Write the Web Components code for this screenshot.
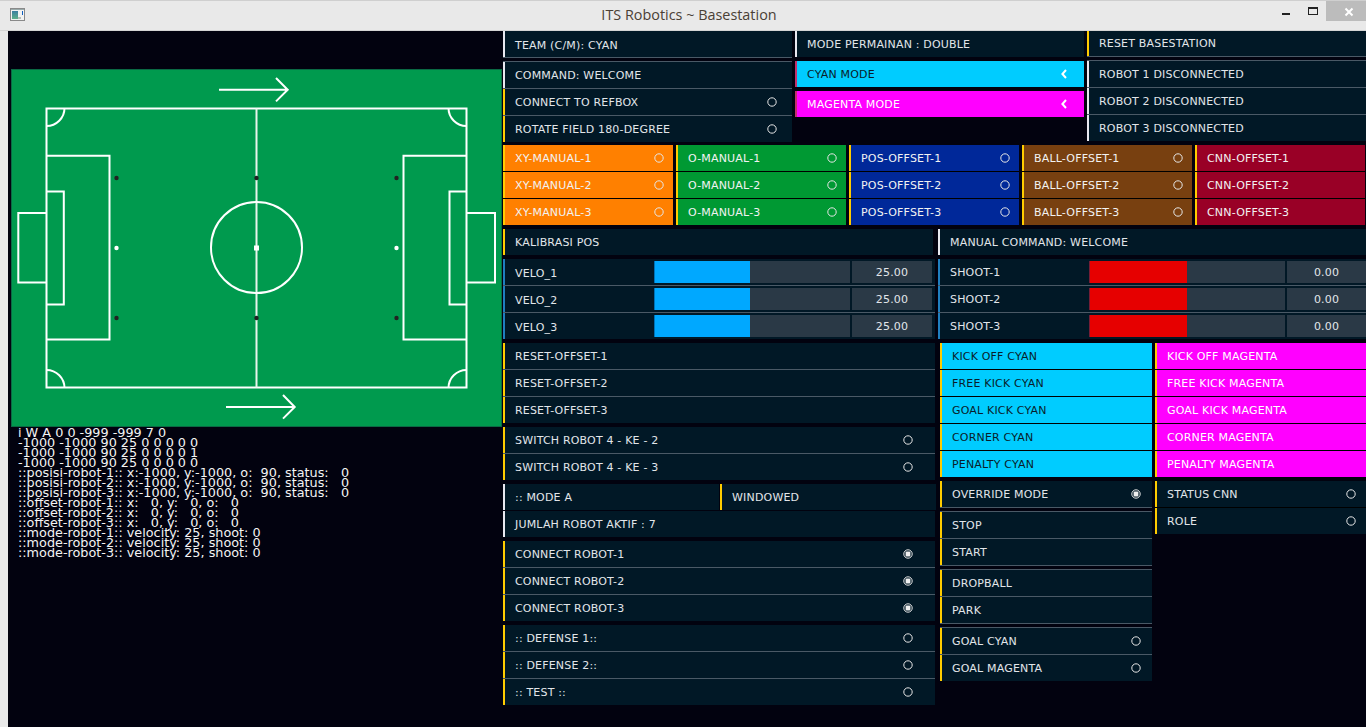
<!DOCTYPE html>
<html><head><meta charset="utf-8"><title>ITS Robotics ~ Basestation</title>
<style>
html,body{margin:0;padding:0;background:#e9e9e9;overflow:hidden}
</style></head><body>
<script>
const def=(name,css,html)=>{
  customElements.define(name,class extends HTMLElement{
    constructor(){super();this.attachShadow({mode:'open'}).innerHTML='<style>'+css+'</style>'+html;}
  });
};
def('x-window',`:host{display:flex;flex-direction:column;width:1366px;height:727px;overflow:hidden;box-sizing:border-box;background:#e9e9e9}
 .body{display:flex;flex:1;min-height:0;margin-left:8px;background:#02020f}
 `,`<slot name="title"></slot><div class="body"><slot></slot></div>`);
def('x-titlebar',`:host{display:flex;height:31px;box-sizing:border-box;border-top:1px solid #cfcfcf;border-bottom:1px solid #d4d4d4;background:#e9e9e9;align-items:flex-start;flex:none}
 .ic{width:98px;flex:none;padding:7px 0 0 10px;box-sizing:border-box}
 .t{flex:none;width:1182px;text-align:center;font:14.4px/28px "Open Sans","Noto Sans",sans-serif;color:#4a4036}
 .c{display:flex;width:86px;flex:none;height:20px}
 .x{width:40px;height:20px;margin-left:auto;background:#bcbcbc}
 svg{display:block}`,
 `<div class="ic"><svg width="15" height="14" viewBox="0 0 15 14"><rect x=".5" y=".5" width="14" height="12" fill="#f2f2f2" stroke="#8a8a8a"/><rect x="1" y="1" width="13" height="1" fill="#9aa"/><defs><linearGradient id="g" x1="0" y1="0" x2="0" y2="1"><stop offset="0" stop-color="#3c7fa0"/><stop offset="1" stop-color="#5fb08a"/></linearGradient></defs><rect x="2" y="3" width="6" height="8" fill="url(#g)"/><rect x="12" y="3" width="1" height="4" fill="#1060c0"/><rect x="8" y="9" width="3" height="2" fill="#b8c0b8"/></svg></div>
 <div class="t"><slot></slot></div>
 <div class="c"><svg width="46" height="20" style="flex:none"><rect x="2" y="12" width="8" height="2" fill="#222"/><rect x="28.5" y="6.5" width="9" height="7" fill="none" stroke="#222"/><rect x="28" y="6" width="10" height="2" fill="#222"/></svg><div class="x"><svg width="40" height="20"><path d="M19.5 7.5l7 7M26.5 7.5l-7 7" stroke="#fff" stroke-width="2"/></svg></div></div>`);
def('x-left',`:host{display:flex;flex-direction:column;width:495px;flex:none}
 .f{margin:38px 0 0 3px;height:358px;flex:none}`,`<div class="f"><slot name="field"></slot></div><slot></slot>`);
def('x-field',`:host{display:block}svg{display:block}`,
`<svg width="492" height="358" viewBox="11 69 492 358">
<rect x="11.5" y="69.5" width="490" height="357" fill="#009a4e" stroke="#0a6a44"/>
<g fill="none" stroke="#fff" stroke-width="2">
<path d="M46.5 108.5H466.5V387.5H46.5Z"/>
<path d="M256.5 108.5V387.5" stroke="#e8f4ec"/>
<circle cx="256.5" cy="247.5" r="45.5"/>
<path d="M46.5 155.8H109.5V339.5H46.5"/><path d="M46.5 191.5H63.8V304.5H46.5"/><path d="M46.5 213H18.3V282.5H46.5"/>
<path d="M466.5 155.8H403.5V339.5H466.5"/><path d="M466.5 191.5H449.5V304.5H466.5"/><path d="M466.5 213H495V282.5H466.5"/>
<path d="M46.5 126a18 18 0 0 0 18-18"/><path d="M466.5 126a18 18 0 0 1-18-18"/>
<path d="M46.5 370a18 18 0 0 1 18 18"/><path d="M466.5 370a18 18 0 0 0-18 18"/>
<path d="M219 89.7H287.5M276 78L287.7 89.7L276 101.4"/>
<path d="M226 407H294.5M283 395L294.7 407L283 418.6"/>
</g>
<g fill="#222"><circle cx="116.5" cy="178" r="2.2"/><circle cx="256.5" cy="178" r="2.2"/><circle cx="396.5" cy="178" r="2.2"/><circle cx="116.5" cy="318" r="2.2"/><circle cx="256.5" cy="318" r="2.2"/><circle cx="396.5" cy="318" r="2.2"/></g>
<g fill="#fff"><circle cx="116.5" cy="248" r="2.2"/><circle cx="396.5" cy="248" r="2.2"/><rect x="254" y="245.5" width="5" height="5"/></g>
</svg>`);
def('x-log',`:host{display:block;padding:1px 0 0 10px;font:12.8px/10px "DejaVu Sans",sans-serif;color:#f4f4f4;white-space:pre}`,`<slot></slot>`);
def('x-right',`:host{display:flex;flex-direction:column;width:863px;flex:none;gap:3px;overflow:hidden}`,`<slot></slot>`);
def('x-band',`:host{display:flex;flex:none;align-items:flex-start}`,`<slot></slot>`);
def('x-stack',`:host{display:flex;flex-direction:column;flex:none}`,`<slot></slot>`);
def('x-group',`:host{display:flex;flex-direction:column;gap:1px;background:var(--line,#4a5966);flex:none}`,`<slot></slot>`);
const rowCss=`:host{display:flex;align-items:flex-start;height:26px;box-sizing:border-box;border-left:2px solid var(--bar,#ffcc00);background:var(--bg,#011826);color:var(--fg,#e2e6ea);padding-left:10px;font:11px "DejaVu Sans",sans-serif;letter-spacing:.18px;flex:none;white-space:pre;overflow:hidden}
 :host([bar=w]){--bar:#e8e8f0}:host([bar=b]){--bar:#1f7fbf}:host([bar=r]){--bar:#c0306a}
 .l{flex:1;min-width:0;line-height:var(--lh,28px)}svg{display:block;flex:none;align-self:center}`;
const radio=on=>`<svg width="10" height="10" viewBox="0 0 10 10"><circle cx="5" cy="5" r="4.2" fill="none" stroke="#e6e6e6" stroke-width="1"/>${on?'<rect x="2.6" y="2.6" width="4.8" height="4.8" rx="1" fill="#f0f0f0"/>':''}</svg>`;
def('x-row',rowCss,`<span class="l"><slot></slot></span>`);
def('x-toggle',rowCss+`:host{padding-right:var(--rr,15px)}`,`<span class="l"><slot></slot></span>${radio(false)}`);
def('x-toggle-on',rowCss+`:host{padding-right:var(--rr,15px)}`,`<span class="l"><slot></slot></span>${radio(true)}`);
def('x-mode',rowCss+`:host{padding-right:17px}`,`<span class="l"><slot></slot></span><svg width="6" height="10" viewBox="0 0 6 10"><path d="M5 1L1.4 5L5 9" fill="none" stroke="#fff" stroke-width="2"/></svg>`);
def('x-slider',rowCss+`:host{padding:2px 0 2px 10px;align-items:stretch}
 .l{flex:none;width:139px;line-height:var(--sl,26px)}
 .t{flex:none;width:196px;background:#2a3946}
 .f{height:100%;width:var(--fill,96px);background:var(--fc,#00a8ff);border-left:1px solid rgba(0,60,110,.5);box-sizing:border-box}
 .v{flex:1;margin:0 var(--vr,3px) 0 2px;background:#2a3946;text-align:center;line-height:24px}`,
 `<span class="l"><slot></slot></span><div class="t"><div class="f"></div></div><div class="v"><slot name="v"></slot></div>`);

const W=document.createElement('x-window');
const R=(t,a='')=>`<x-row ${a}>${t}</x-row>`;
const T=(t,rr,on,a='')=>`<x-toggle${on?'-on':''} ${a} style="--rr:${rr-5}px">${t}</x-toggle${on?'-on':''}>`;
const C=(n,bg,fg='#f2f2f2')=>`<x-group style="--line:#000;--bg:${bg};--fg:${fg};width:170px;margin-right:3px">${[1,2,3].map(i=>T(n+'-'+i,14,false)).join('')}</x-group>`;
const SL=(t,v,s)=>`<x-slider bar="b" style="${s}">${t}<span slot="v">${v}</span></x-slider>`;
const colorRows=(list,bg,fg,w)=>`<x-group style="--line:#000;--bg:${bg};--fg:${fg};width:${w}px">${list.map(t=>R(t)).join('')}</x-group>`;
W.innerHTML=`<x-titlebar slot="title">ITS Robotics ~ Basestation</x-titlebar>
<x-left><x-field slot="field"></x-field><x-log>i W A 0 0 -999 -999 7 0
-1000 -1000 90 25 0 0 0 0 0
-1000 -1000 90 25 0 0 0 0 1
-1000 -1000 90 25 0 0 0 0 0
::posisi-robot-1:: x:-1000, y:-1000, o:  90, status:   0
::posisi-robot-2:: x:-1000, y:-1000, o:  90, status:   0
::posisi-robot-3:: x:-1000, y:-1000, o:  90, status:   0
::offset-robot-1:: x:   0, y:   0, o:   0
::offset-robot-2:: x:   0, y:   0, o:   0
::offset-robot-3:: x:   0, y:   0, o:   0
::mode-robot-1:: velocity: 25, shoot: 0
::mode-robot-2:: velocity: 25, shoot: 0
::mode-robot-3:: velocity: 25, shoot: 0</x-log></x-left>
<x-right>
 <x-band>
  <x-stack style="width:289px;margin-right:3px;gap:3px">
   <x-group style="padding-bottom:1px"><x-row bar="w" style="--lh:30px">TEAM (C/M): CYAN</x-row></x-group>
   <x-group style="padding-top:1px">${R('COMMAND: WELCOME','bar="w"')}${T('CONNECT TO REFBOX',20)}${T('ROTATE FIELD 180-DEGREE',20)}</x-group>
  </x-stack>
  <x-stack style="width:289px;margin-right:3px;gap:4px">
   ${R('MODE PERMAINAN : DOUBLE','bar="w"')}
   <x-mode bar="r" style="--bg:#00ccff;--fg:#0a1c2a">CYAN MODE</x-mode>
   <x-mode bar="r" style="--bg:#ff00ff;--fg:#fff">MAGENTA MODE</x-mode>
  </x-stack>
  <x-stack style="width:279px;gap:3px">
   <x-group style="padding-bottom:1px"><x-row style="height:25px;--lh:25px">RESET BASESTATION</x-row></x-group>
   <x-group style="padding-top:1px">${R('ROBOT 1 DISCONNECTED','bar="w"')}${R('ROBOT 2 DISCONNECTED','bar="w"')}${R('ROBOT 3 DISCONNECTED','bar="w"')}</x-group>
  </x-stack>
 </x-band>
 <x-band>${C('XY-MANUAL','#ff8000')}${C('O-MANUAL','#009933')}${C('POS-OFFSET','#002899')}${C('BALL-OFFSET','#784010')}
  <x-group style="--line:#000;--bg:#990026;--fg:#f2f2f2;width:170px">${[1,2,3].map(i=>R('CNN-OFFSET-'+i)).join('')}</x-group></x-band>
 <x-band style="margin-top:1px">
  <x-stack style="width:433px;margin-right:2px;gap:4px">
   <x-row style="width:430px">KALIBRASI POS</x-row>
   <x-group style="width:432px">${[1,2,3].map(i=>SL('VELO_'+i,'25.00','')).join('')}</x-group>
   <x-group style="width:432px">${[1,2,3].map(i=>R('RESET-OFFSET-'+i)).join('')}</x-group>
   <x-group style="width:432px">${T('SWITCH ROBOT 4 - KE - 2',27)}${T('SWITCH ROBOT 4 - KE - 3',27)}</x-group>
   <x-stack style="gap:1px">
    <x-band style="gap:1px"><x-row bar="w" style="width:216px">:: MODE A</x-row><x-row style="width:216px">WINDOWED</x-row></x-band>
    <x-row bar="w" style="width:432px">JUMLAH ROBOT AKTIF : 7</x-row>
   </x-stack>
   <x-group style="width:432px">${[1,2,3].map(i=>T('CONNECT ROBOT-'+i,27,true)).join('')}</x-group>
   <x-group style="width:432px">${T(':: DEFENSE 1::',27)}${T(':: DEFENSE 2::',27)}${T(':: TEST ::',27)}</x-group>
  </x-stack>
  <x-stack style="width:428px;gap:4px">
   ${R('MANUAL COMMAND: WELCOME','bar="w"')}
   <x-group>${[1,2,3].map(i=>SL('SHOOT-'+i,'0.00','--fill:98px;--fc:#e60000;--vr:0px;--sl:24px')).join('')}</x-group>
   <x-band style="margin-left:2px;gap:3px">
    <x-stack style="width:212px;gap:4px">
     ${colorRows(['KICK OFF CYAN','FREE KICK CYAN','GOAL KICK CYAN','CORNER CYAN','PENALTY CYAN'],'#00ccff','#0a1c2a',212)}
     <x-stack style="gap:3px">
      <x-group style="padding-bottom:1px">${T('OVERRIDE MODE',16,true)}</x-group>
      <x-group style="padding:1px 0">${R('STOP')}${R('START')}</x-group>
      <x-group style="padding:1px 0">${R('DROPBALL')}${R('PARK')}</x-group>
      <x-group style="padding-top:1px">${T('GOAL CYAN',16)}${T('GOAL MAGENTA',16)}</x-group>
     </x-stack>
    </x-stack>
    <x-stack style="width:211px;gap:4px">
     ${colorRows(['KICK OFF MAGENTA','FREE KICK MAGENTA','GOAL KICK MAGENTA','CORNER MAGENTA','PENALTY MAGENTA'],'#ff00ff','#fff',211)}
     <x-group style="--line:#000">${T('STATUS CNN',15)}${T('ROLE',15)}</x-group>
    </x-stack>
   </x-band>
  </x-stack>
 </x-band>
</x-right>`;
document.body.appendChild(W);
</script>
</body></html>
